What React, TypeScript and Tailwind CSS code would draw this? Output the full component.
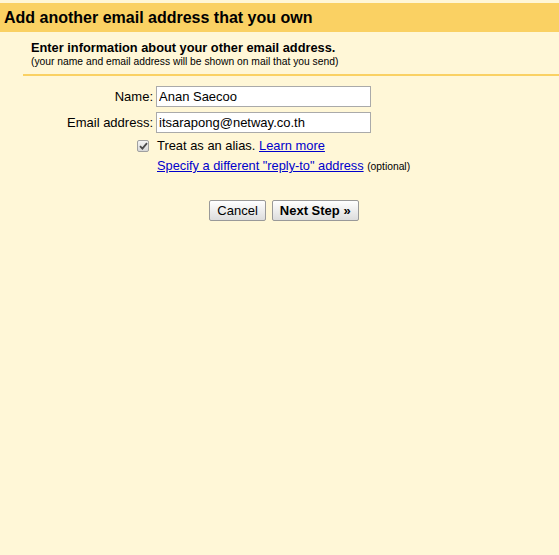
export default function App() {
  return (
    <div
      className="min-h-[555px] bg-[#fff7d7] pt-[3px] text-[13px] text-black"
      style={{ fontFamily: '"Liberation Sans", Arial, sans-serif' }}
    >
      <div className="flex h-[29px] items-center bg-[#fad163] px-[4px]">
        <h1 className="text-[16px] font-bold">Add another email address that you own</h1>
      </div>

      <div className="ml-[23px] border-b-2 border-[#fad163] pb-[6px] pl-[8px] pt-[8px]">
        <div className="text-[12.8px] font-bold leading-[15px]">
          Enter information about your other email address.
        </div>
        <div className="text-[10.3px] leading-[13px]">
          (your name and email address will be shown on mail that you send)
        </div>
      </div>

      <div className="mt-[10px] flex flex-col gap-[5px]">
        <div className="flex items-center">
          <label className="w-[156px] pr-[3px] text-right">Name:</label>
          <input
            defaultValue="Anan Saecoo"
            className="h-[21px] w-[215px] border border-[#aaa] bg-white px-[2px] text-[13px] outline-none"
          />
        </div>
        <div className="flex items-center">
          <label className="w-[156px] pr-[3px] text-right">Email address:</label>
          <input
            defaultValue="itsarapong@netway.co.th"
            className="h-[21px] w-[215px] border border-[#aaa] bg-white px-[2px] text-[13px] outline-none"
          />
        </div>
      </div>

      <div className="mt-[3px] flex items-center pl-[137px]">
        <span className="flex h-[12px] w-[12px] items-center justify-center rounded-[2px] border border-[#a0a0a0] bg-gradient-to-b from-[#f4f4f4] to-[#d8d8d8]">
          <svg width="9" height="8" viewBox="0 0 9 8">
            <path d="M1 4.2 L3.4 6.6 L8 1.2" fill="none" stroke="#4a4a4a" strokeWidth="1.8" />
          </svg>
        </span>
        <span className="ml-[8px] text-[12.9px]">
          Treat as an alias.{" "}
          <a href="#" className="text-[#0000cc] underline">
            Learn more
          </a>
        </span>
      </div>

      <div className="mt-[1px] pl-[157px] text-[12.8px]">
        <a href="#" className="text-[#0000cc] underline">
          Specify a different "reply-to" address
        </a>{" "}
        <span className="text-[10.3px]">(optional)</span>
      </div>

      <div className="mt-[24px] flex justify-center gap-[6px] pl-[9px]">
        <button className="h-[21px] rounded-[2px] border border-[#999] bg-gradient-to-b from-white to-[#ddd] px-[7px] text-[13px]">
          Cancel
        </button>
        <button className="h-[21px] rounded-[2px] border border-[#999] bg-gradient-to-b from-white to-[#ddd] px-[7px] text-[13px] font-bold">
          Next Step »
        </button>
      </div>
    </div>
  );
}
